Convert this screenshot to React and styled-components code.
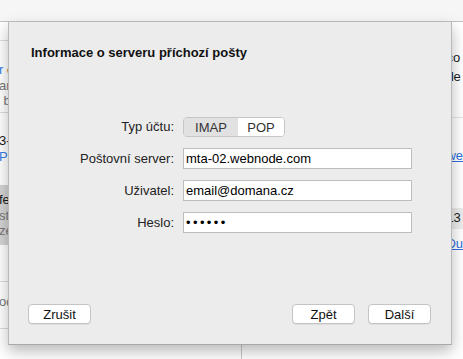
import React from 'react'
import styled, { createGlobalStyle } from 'styled-components'

const Global = createGlobalStyle`
  html, body { margin: 0; padding: 0; background: #fff; }
  body { font-family: 'Liberation Sans', Arial, sans-serif; }
`

const Window = styled.div`
  position: relative;
  width: 463px;
  height: 359px;
  overflow: hidden;
  background: #fff;
  font-size: 13px;
  color: #111;
`

const Toolbar = styled.div`
  height: 21px;
  background: #f6f6f6;
  border-bottom: 1px solid #c2c2c2;
`

const Body = styled.div`
  display: flex;
  height: 337px;
`

const List = styled.div`
  width: 248px;
  border-right: 1px solid #c8c8c8;
  display: flex;
  flex-direction: column;
`

const ListRow = styled.div`
  height: ${p => p.$h}px;
  padding-top: ${p => p.$pt || 0}px;
  box-sizing: border-box;
  border-bottom: ${p => (p.$line ? '1px solid #dcdcdc' : 'none')};
  background: ${p => (p.$selected ? '#d4d4d4' : 'transparent')};
  display: flex;
  flex-direction: column;
`

const Line = styled.span`
  height: ${p => p.$lh || 15.5}px;
  line-height: ${p => p.$lh || 15.5}px;
  white-space: nowrap;
  margin-left: ${p => p.$shift || 0}px;
  color: ${p => (p.$tone === 'blue' ? '#2f7be6' : p.$tone === 'gray' ? '#777' : '#1a1a1a')};
`

const Blue = styled.span`
  color: #2f7be6;
`

const Pane = styled.div`
  flex: 1;
  display: flex;
  flex-direction: column;
  padding-left: 204px;
`

const PaneRow = styled.div`
  height: ${p => p.$h}px;
  padding-top: ${p => p.$pt || 0}px;
  box-sizing: border-box;
  border-bottom: ${p => (p.$line ? '1px solid #e4e4e4' : 'none')};
  background: ${p => (p.$band ? '#ececec' : 'transparent')};
  margin-left: ${p => (p.$band ? -10 : 0)}px;
  padding-left: ${p => (p.$band ? 10 : 0)}px;
  display: flex;
  flex-direction: column;
`

const Link = styled.span`
  color: #2f6fe0;
  text-decoration: underline;
  line-height: 16px;
  white-space: nowrap;
`

const Sheet = styled.div`
  position: absolute;
  left: 8px;
  top: 22px;
  width: 444px;
  height: 323px;
  box-sizing: border-box;
  background: #ececec;
  border-left: 1px solid #b9b9b9;
  border-right: 1px solid #b9b9b9;
  border-bottom: 1px solid #a9a9a9;
  box-shadow: 0 6px 14px rgba(0, 0, 0, 0.28);
  display: flex;
  flex-direction: column;
  padding: 23px 20px 20px 19px;
`

const Title = styled.h1`
  margin: 0 0 0 3px;
  font-size: 13px;
  line-height: 16px;
  font-weight: bold;
  color: #111;
`

const Form = styled.div`
  margin-top: 56px;
  display: grid;
  grid-template-columns: 146px 229px;
  column-gap: 9px;
  row-gap: 11px;
  align-items: center;
`

const Label = styled.label`
  text-align: right;
  color: #222;
  line-height: 16px;
  white-space: nowrap;
`

const Segmented = styled.div`
  display: flex;
  width: 102px;
  height: 20px;
  box-sizing: border-box;
  border: 1px solid #c6c6c6;
  border-radius: 4px;
  overflow: hidden;
  background: #fff;
`

const Segment = styled.div`
  width: ${p => p.$w}px;
  display: flex;
  align-items: center;
  justify-content: center;
  color: #333;
  background: ${p => (p.$active ? '#e1e1e1' : '#fff')};
`

const Field = styled.input`
  height: 21px;
  box-sizing: border-box;
  width: 229px;
  border: 1px solid #bdbdbd;
  background: #fff;
  padding: 0 2px;
  font-family: 'Liberation Sans', Arial, sans-serif;
  font-size: 13px;
  color: #000;
  outline: none;
  letter-spacing: ${p => (p.$dots ? '2.4px' : 'normal')};
`

const Footer = styled.div`
  margin-top: auto;
  display: flex;
  align-items: center;
`

const Button = styled.button`
  width: 63px;
  height: 20px;
  box-sizing: border-box;
  background: #fff;
  border: 1px solid #c4c4c4;
  border-radius: 4px;
  box-shadow: 0 1px 0 rgba(0, 0, 0, 0.06);
  font-family: 'Liberation Sans', Arial, sans-serif;
  font-size: 13px;
  color: #111;
  padding: 0;
  margin-left: ${p => p.$ml || 0}px;
`

export default function App() {
  return (
    <Window>
      <Global />
      <Toolbar />
      <Body>
        <List>
          <ListRow $h={19} $line />
          <ListRow $h={72} $pt={21} $line>
            <Line $shift={-1}><Blue>r</Blue> c</Line>
            <Line $tone="gray" $shift={-1}>ar</Line>
            <Line $tone="gray">&nbsp;b</Line>
          </ListRow>
          <ListRow $h={72} $pt={20}>
            <Line $shift={-1}>3-</Line>
            <Line $tone="blue" $shift={-1}>P</Line>
          </ListRow>
          <ListRow $h={60} $pt={7} $selected>
            <Line $shift={-1}>fe</Line>
            <Line $tone="gray" $shift={-1}>st</Line>
            <Line $tone="gray" $shift={-1}>ze</Line>
          </ListRow>
          <ListRow $h={37} $line />
          <ListRow $h={47} $pt={12} $line>
            <Line $tone="gray" $shift={-1}>od</Line>
          </ListRow>
        </List>
        <Pane>
          <PaneRow $h={96} $pt={26} $line>
            <Line $lh={19}>co</Line>
            <Line $lh={19}>de</Line>
          </PaneRow>
          <PaneRow $h={90} $pt={30}>
            <Link>we</Link>
          </PaneRow>
          <PaneRow $h={21} $pt={2} $band>
            <Line>13</Line>
          </PaneRow>
          <PaneRow $h={40} $pt={7}>
            <Link>Du</Link>
          </PaneRow>
        </Pane>
      </Body>

      <Sheet>
        <Title>Informace o serveru příchozí pošty</Title>
        <Form>
          <Label>Typ účtu:</Label>
          <Segmented>
            <Segment $w={54} $active>IMAP</Segment>
            <Segment $w={46}>POP</Segment>
          </Segmented>

          <Label htmlFor="server">Poštovní server:</Label>
          <Field id="server" readOnly value="mta-02.webnode.com" />

          <Label htmlFor="user">Uživatel:</Label>
          <Field id="user" readOnly value="email@domana.cz" />

          <Label htmlFor="pass">Heslo:</Label>
          <Field id="pass" readOnly $dots value="••••••" />
        </Form>
        <Footer>
          <Button>Zrušit</Button>
          <Button $ml={201}>Zpět</Button>
          <Button $ml={13}>Další</Button>
        </Footer>
      </Sheet>
    </Window>
  )
}
